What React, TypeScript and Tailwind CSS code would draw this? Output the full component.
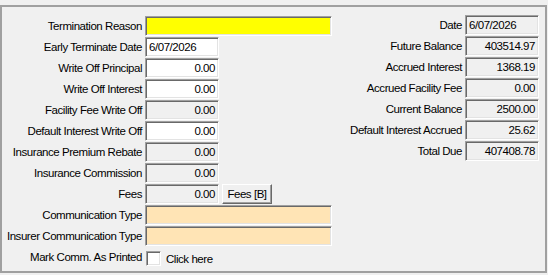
import React from "react";

const sunken =
  "border border-t-[#a0a0a0] border-l-[#a0a0a0] border-b-white border-r-white shadow-[inset_1px_1px_0_#696969,inset_-1px_-1px_0_#e3e3e3]";

type FieldProps = {
  value?: string;
  bg: string;
  w: string;
  align?: "left" | "right";
};

function Field({ value = "", bg, w, align = "right" }: FieldProps) {
  return (
    <div
      className={`${sunken} ${bg} ${w} h-[20px] flex items-center px-[3px] ${
        align === "right" ? "justify-end" : "justify-start"
      }`}
    >
      <span className="leading-none pt-[2px]">{value}</span>
    </div>
  );
}

function Row({
  label,
  children,
  labelW,
}: {
  label: string;
  children: React.ReactNode;
  labelW: string;
}) {
  return (
    <div className="flex items-center h-[20px]">
      <div className={`${labelW} text-right whitespace-nowrap pr-[3px] pt-[2px] leading-none`}>{label}</div>
      {children}
    </div>
  );
}

export default function App() {
  const L = "w-[143px]";
  const R = "w-[133px]";
  return (
    <div
      className="w-[548px] h-[275px] bg-[#f0f0f0] text-black text-[11.5px] tracking-[-0.45px] overflow-hidden"
      style={{ fontFamily: '"Liberation Sans", Arial, sans-serif' }}
    >
      <div className="mt-[5px] w-[547px] h-[268px] border-2 border-[#a0a0a0] flex">
        {/* left column */}
        <div className="flex flex-col gap-[1px] pt-[9px]">
          <Row label="Termination Reason" labelW={L}>
            <Field bg="bg-[#ffff00]" w="w-[187px]" />
          </Row>
          <Row label="Early Terminate Date" labelW={L}>
            <Field bg="bg-white" w="w-[74px]" value="6/07/2026" align="left" />
          </Row>
          <Row label="Write Off Principal" labelW={L}>
            <Field bg="bg-white" w="w-[74px]" value="0.00" />
          </Row>
          <Row label="Write Off Interest" labelW={L}>
            <Field bg="bg-white" w="w-[74px]" value="0.00" />
          </Row>
          <Row label="Facility Fee Write Off" labelW={L}>
            <Field bg="bg-[#f0f0f0]" w="w-[74px]" value="0.00" />
          </Row>
          <Row label="Default Interest Write Off" labelW={L}>
            <Field bg="bg-white" w="w-[74px]" value="0.00" />
          </Row>
          <Row label="Insurance Premium Rebate" labelW={L}>
            <Field bg="bg-[#f0f0f0]" w="w-[74px]" value="0.00" />
          </Row>
          <Row label="Insurance Commission" labelW={L}>
            <Field bg="bg-[#f0f0f0]" w="w-[74px]" value="0.00" />
          </Row>
          <Row label="Fees" labelW={L}>
            <Field bg="bg-[#f0f0f0]" w="w-[74px]" value="0.00" />
            <button className="ml-[3px] w-[50px] h-[20px] bg-[#f0f0f0] border border-t-white border-l-white border-b-[#696969] border-r-[#696969] shadow-[inset_-1px_-1px_0_#a0a0a0] flex items-center justify-center leading-none pt-[2px]">
              Fees [B]
            </button>
          </Row>
          <Row label="Communication Type" labelW={L}>
            <Field bg="bg-[#ffe4b5]" w="w-[187px]" />
          </Row>
          <Row label="Insurer Communication Type" labelW={L}>
            <Field bg="bg-[#ffe4b5]" w="w-[187px]" />
          </Row>
          <Row label="Mark Comm. As Printed" labelW={L}>
            <div className="flex items-center">
              <div className={`${sunken} bg-white w-[15px] h-[15px] ml-[1px] mt-[2px]`} />
              <span className="ml-[5px] mt-[5px] leading-none">Click here</span>
            </div>
          </Row>
        </div>
        {/* right column */}
        <div className="flex flex-col gap-[1px] pt-[8px]">
          <Row label="Date" labelW={R}>
            <Field bg="bg-[#f0f0f0]" w="w-[74px]" value="6/07/2026" align="left" />
          </Row>
          <Row label="Future Balance" labelW={R}>
            <Field bg="bg-[#f0f0f0]" w="w-[74px]" value="403514.97" />
          </Row>
          <Row label="Accrued Interest" labelW={R}>
            <Field bg="bg-[#f0f0f0]" w="w-[74px]" value="1368.19" />
          </Row>
          <Row label="Accrued Facility Fee" labelW={R}>
            <Field bg="bg-[#f0f0f0]" w="w-[74px]" value="0.00" />
          </Row>
          <Row label="Current Balance" labelW={R}>
            <Field bg="bg-[#f0f0f0]" w="w-[74px]" value="2500.00" />
          </Row>
          <Row label="Default Interest Accrued" labelW={R}>
            <Field bg="bg-[#f0f0f0]" w="w-[74px]" value="25.62" />
          </Row>
          <Row label="Total Due" labelW={R}>
            <Field bg="bg-[#f0f0f0]" w="w-[74px]" value="407408.78" />
          </Row>
        </div>
      </div>
    </div>
  );
}
